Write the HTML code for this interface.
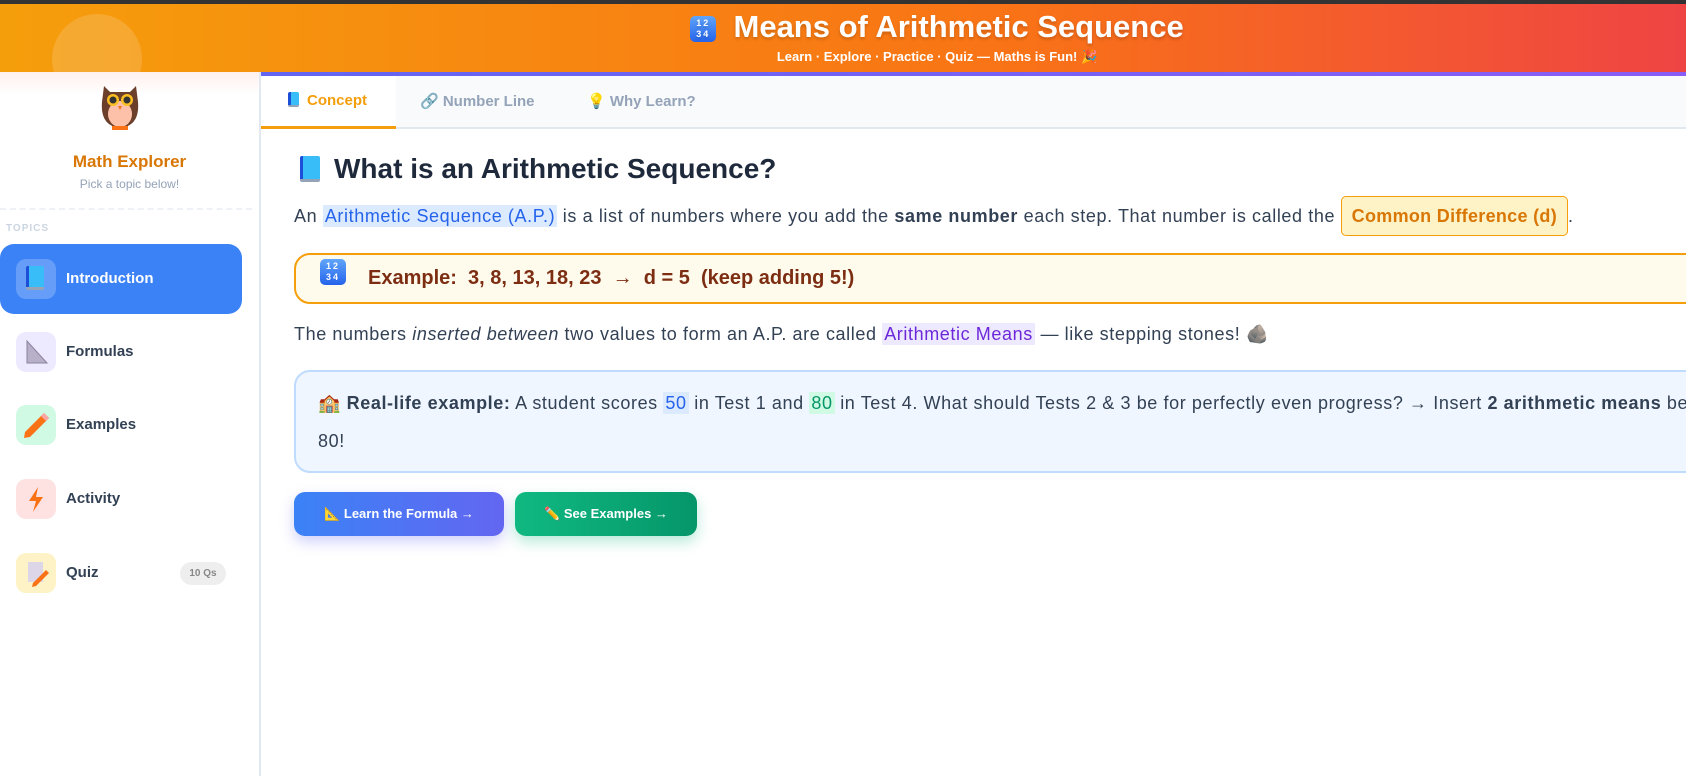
<!DOCTYPE html>
<html><head><meta charset="utf-8"><style>
*{margin:0;padding:0;box-sizing:border-box}
body{width:1686px;height:776px;overflow:hidden;font-family:"Liberation Sans",sans-serif;background:#fff;position:relative}
.top{position:absolute;left:0;top:0;width:1686px;height:4px;background:#333}
.hdr{position:absolute;left:0;top:4px;width:1686px;height:68px;background:linear-gradient(90deg,#f59e0b 0%,#f97316 60%,#ef4444 100%);overflow:hidden}
.circ{position:absolute;left:52px;top:10px;width:90px;height:90px;border-radius:50%;background:rgba(255,255,255,.15)}
.title{position:absolute;left:0;width:1874px;text-align:center;top:5px;color:#fff;font-weight:bold;font-size:31px;text-shadow:0 2px 3px rgba(0,0,0,.2)}
.sub{position:absolute;left:0;width:1874px;text-align:center;top:45px;color:#fff;font-weight:bold;font-size:13px}
.num{display:inline-block;width:26px;height:26px;border-radius:5px;background:linear-gradient(#60a5fa,#2563eb);color:#fff;font-size:9px;line-height:11px;text-align:center;padding-top:2px;vertical-align:middle;letter-spacing:2px;font-weight:bold}
.side{position:absolute;left:0;top:72px;width:261px;height:704px;border-right:2px solid #e2e8f0;background:linear-gradient(#fff0ee 0,#fff 22px)}
.me{position:absolute;top:80px;width:259px;text-align:center;color:#d97706;font-weight:bold;font-size:17px}
.pk{position:absolute;top:105px;width:259px;text-align:center;color:#94a3b8;font-size:12px}
.dash{position:absolute;left:0;top:136px;width:252px;border-top:2px dashed #eef1f5}
.tp{position:absolute;left:6px;top:151px;font-size:10px;font-weight:bold;color:#cbd5e1;letter-spacing:1px}
.it{position:absolute;left:0;width:242px;height:70px;border-radius:14px}
.it .ic{position:absolute;left:16px;top:15px;width:40px;height:40px;border-radius:10px}
.it .lb{position:absolute;left:66px;top:26px;font-size:15px;font-weight:bold;color:#334155}
.badge{position:absolute;left:180px;top:24px;width:46px;height:23px;border-radius:12px;background:#eee;color:#888;font-size:10px;font-weight:bold;text-align:center;line-height:23px}
.main{position:absolute;left:261px;top:72px;width:1425px;height:704px;overflow:hidden}
.pl{position:absolute;left:0;top:0;width:1500px;height:4px;background:linear-gradient(90deg,#6366f1,#8b5cf6)}
.tabs{position:absolute;left:0;top:4px;width:1500px;height:53px;background:#f8fafc;border-bottom:2px solid #e2e8f0}
.tab{position:absolute;top:0;height:53px;line-height:52px;font-size:15px;font-weight:bold;color:#94a3b8}
.h1{position:absolute;left:39px;top:81px;font-size:28px;font-weight:bold;color:#1e293b}
.book{display:inline-block;width:20px;height:26px;background:linear-gradient(90deg,#1d4ed8 0 3px,#38bdf8 3px);border-radius:2px;vertical-align:-4px;margin-right:14px;border-bottom:3px solid #94a3b8}
p{position:absolute;left:33px;font-size:18px;letter-spacing:.6px;color:#334155;white-space:nowrap}
.hl{background:#dbeafe;color:#2563eb;padding:1px 2px}
.cd{background:#fef3c7;border:1px solid #f59e0b;color:#d97706;font-weight:bold;padding:9px 10px;border-radius:5px;letter-spacing:.3px}
.ex{position:absolute;left:33px;top:181px;width:1500px;height:51px;border:2px solid #f59e0b;background:#fefbec;border-radius:16px}
.rl{position:absolute;left:33px;top:298px;width:1500px;height:103px;border:2px solid #bfdbfe;background:#eff6ff;border-radius:16px}
.btn{position:absolute;top:420px;height:44px;border-radius:11px;color:#fff;font-size:13px;font-weight:bold;line-height:44px;text-align:center}
</style></head><body>
<div class="top"></div>
<div class="hdr"><div class="circ"></div>
<div class="title"><span class="num">12<br>34</span>&nbsp; Means of Arithmetic Sequence</div>
<div class="sub">Learn · Explore · Practice · Quiz — Maths is Fun! 🎉</div>
</div>
<div class="side">
<svg style="position:absolute;left:100px;top:10px" width="40" height="50" viewBox="0 0 40 50">
<path d="M4 4 L10 10 L30 10 L36 4 L38 20 Q40 44 20 46 Q0 44 2 20 Z" fill="#6b3f2a"/>
<ellipse cx="20" cy="32" rx="12" ry="13" fill="#fcc1a8"/>
<circle cx="13" cy="18" r="6" fill="#fbbf24"/><circle cx="27" cy="18" r="6" fill="#fbbf24"/>
<circle cx="13" cy="18" r="3.5" fill="#333"/><circle cx="27" cy="18" r="3.5" fill="#333"/>
<path d="M18 24 L22 24 L20 28Z" fill="#f97316"/>
<rect x="12" y="44" width="16" height="4" fill="#f97316"/>
</svg>
<div class="me">Math Explorer</div>
<div class="pk">Pick a topic below!</div>
<div class="dash"></div>
<div class="tp">TOPICS</div>
<div class="it" style="top:172px;background:#3b82f6"><div class="ic" style="background:rgba(255,255,255,.22)"><span class="book" style="margin:7px 0 0 10px;width:18px;height:24px"></span></div><div class="lb" style="color:#fff">Introduction</div></div>
<div class="it" style="top:245px"><div class="ic" style="background:#ede9fe"><svg width="40" height="40"><path d="M11 9 L11 31 L31 31 Z" fill="#b8b0c8" stroke="#8b84a0"/></svg></div><div class="lb">Formulas</div></div>
<div class="it" style="top:318px"><div class="ic" style="background:#d1fae5"><svg width="40" height="40"><path d="M28 8 L33 13 L14 32 L8 33 L9 27 Z" fill="#f97316"/><path d="M28 8 L33 13 L30 16 L25 11Z" fill="#fca5a5"/></svg></div><div class="lb">Examples</div></div>
<div class="it" style="top:392px"><div class="ic" style="background:#fee2e2"><svg width="40" height="40"><path d="M22 8 L13 22 L20 22 L17 33 L27 18 L20 18 Z" fill="#f97316"/></svg></div><div class="lb">Activity</div></div>
<div class="it" style="top:466px"><div class="ic" style="background:#fef3c7"><svg width="40" height="40"><rect x="12" y="9" width="15" height="20" fill="#ddd6e8"/><path d="M30 17 L33 20 L20 33 L16 34 L17 30Z" fill="#f97316"/></svg></div><div class="lb">Quiz</div><div class="badge">10 Qs</div></div>
</div>
<div class="main">
<div class="pl"></div>
<div class="tabs">
<div class="tab" style="left:0;width:135px;background:#fff;border-bottom:3px solid #f59e0b;color:#f59e0b;padding-left:27px;line-height:50px"><span class="book" style="width:11px;height:15px;margin-right:8px;vertical-align:-2px;border-bottom-width:2px"></span>Concept</div>
<div class="tab" style="left:159px">🔗 Number Line</div>
<div class="tab" style="left:326px">💡 Why Learn?</div>
</div>
<div class="h1"><span class="book"></span>What is an Arithmetic Sequence?</div>
<p style="top:133px;line-height:22px">An <span class="hl">Arithmetic Sequence (A.P.)</span> is a list of numbers where you add the <b>same number</b> each step. That number is called the <span class="cd">Common Difference (d)</span>.</p>
<div class="ex"><span class="num" style="position:absolute;left:24px;top:4px">12<br>34</span><span style="position:absolute;left:72px;top:12px;font-size:20px;font-weight:bold;color:#7c2d12;white-space:nowrap">Example:&nbsp; 3, 8, 13, 18, 23 &nbsp;→&nbsp; d = 5 &nbsp;(keep adding 5!)</span></div>
<p style="top:252px">The numbers <i>inserted between</i> two values to form an A.P. are called <span class="hl" style="background:#ede9fe;color:#6d28d9">Arithmetic Means</span> — like stepping stones! 🪨</p>
<div class="rl"><div style="position:absolute;left:22px;top:12px;font-size:18px;letter-spacing:.6px;color:#334155;white-space:nowrap;line-height:38px">🏫 <b>Real-life example:</b> A student scores <span class="hl">50</span> in Test 1 and <span class="hl" style="background:#d1fae5;color:#059669">80</span> in Test 4. What should Tests 2 &amp; 3 be for perfectly even progress? → Insert <b>2 arithmetic means</b> between 50 and<br>80!</div></div>
<div class="btn" style="left:33px;width:210px;background:linear-gradient(90deg,#3b82f6,#6366f1);box-shadow:0 6px 14px rgba(99,102,241,.3)">📐 Learn the Formula →</div>
<div class="btn" style="left:254px;width:182px;background:linear-gradient(90deg,#10b981,#059669);box-shadow:0 6px 14px rgba(16,185,129,.3)">✏️ See Examples →</div>
</div>
</body></html>
